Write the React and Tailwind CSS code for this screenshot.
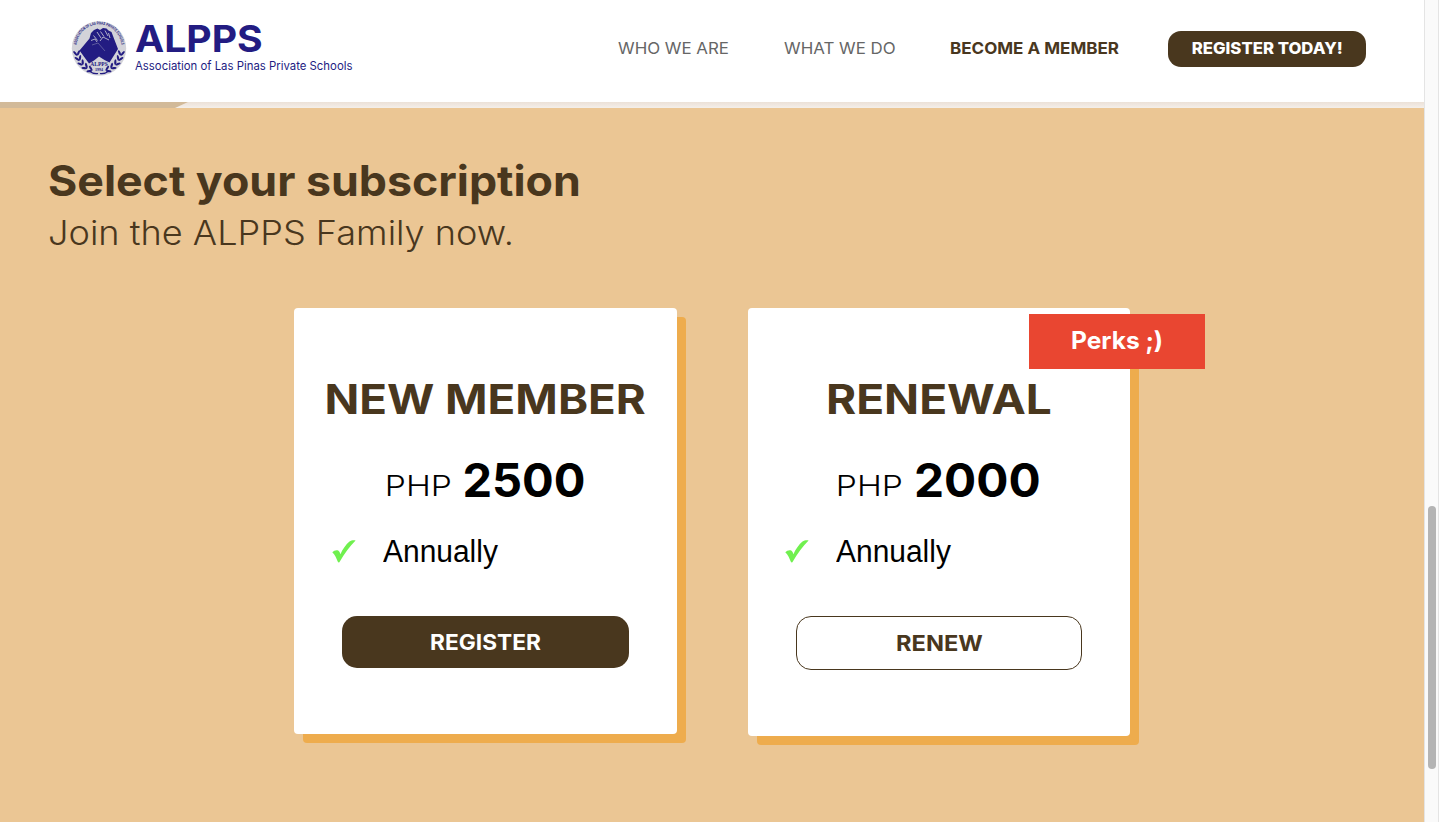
const BROWN = "text-[#49371e]";

function Seal() {
  const leaves = [8, 22, 36, 50, 64].flatMap((deg) => {
    const a = (deg * Math.PI) / 180;
    return [
      { x: 28 - Math.cos(a) * 22.5, y: 28 + Math.sin(a) * 22.5, r: -deg },
      { x: 28 + Math.cos(a) * 22.5, y: 28 + Math.sin(a) * 22.5, r: deg },
    ];
  });
  return (
    <svg viewBox="0 0 56 56" className="mt-px h-[56px] w-[56px] shrink-0 overflow-visible">
      <circle cx="28" cy="27.500" r="27.200" fill="#d3d3d9" />
      <defs>
        <path id="seal-arc" d="M5.500 26a22.500 22.500 0 0 1 45 0" />
      </defs>
      <text fontSize="4.300" fontWeight="700" fill="#231c82" fontFamily="Liberation Sans, sans-serif">
        <textPath href="#seal-arc" startOffset="2" textLength="66" lengthAdjust="spacingAndGlyphs">ASSOCIATION OF LAS PINAS PRIVATE SCHOOLS</textPath>
      </text>
      {leaves.map(({ x, y, r }, i) => (
        <g key={i} transform={`translate(${x} ${y}) rotate(${r})`} fill="#231c82">
          <ellipse cx="-1.900" cy="0" rx="1.100" ry="2.900" transform="rotate(-32)" />
          <ellipse cx="1.900" cy="0" rx="1.100" ry="2.900" transform="rotate(32)" />
        </g>
      ))}
      <path d="M18 50q5 3.500 9 2.500M38 50q-5 3.500-9 2.500" stroke="#231c82" strokeWidth="1.200" fill="none" />
      <path d="M8.500 29.500 18.500 17.500 20 12l3-3 3.500-1.500 2.500 1.500 3-2 3.500.5 2 2 3 1.500 1.500 4L47 28l-8.500 13.500-5-2.500-5.500-3.500-5 4-5 3z" fill="#231c82" />
      <path d="M20 19.500l4-1.500 2 3M22.500 14.500l4 5M26 11l4 6M29.500 10.500l3.500 5M34 9.500l3 5.500M37.500 12l1.500 5M29 20l3-4 6 3" stroke="#d3d3d9" strokeWidth=".8" fill="none" />
      <path d="M21 24l6-2 7 8" stroke="#8583b0" strokeWidth=".6" fill="none" />
      <text x="28" y="45" textAnchor="middle" fontSize="5.500" fontWeight="700" fill="#231c82" fontFamily="Liberation Serif, serif">ALPPS</text>
      <text x="28" y="49.500" textAnchor="middle" fontSize="4" fontWeight="700" fill="#231c82" fontFamily="Liberation Serif, serif">1994</text>
    </svg>
  );
}

function Check() {
  return (
    <svg viewBox="0 0 24 23" className="mb-[2px] h-[23px] w-[24px] shrink-0" fill="#70f04f">
      <path d="M.3 12.200C2 10.400 4.600 9.700 6.200 10.600 7.400 11.400 7.900 12.800 8.400 14.300 10.600 9.500 13.800 4.500 17.500 1.600 19.300.3 21.400.2 23.600.5 18 6 12.500 13.500 8 21.300 7.200 22.900 6.400 22.900 5.700 21.500 4.300 18 3 14.500.3 12.200Z" />
    </svg>
  );
}

function Plan({ title, titleClass, price, priceClass, rowClass, perkClass, cardClass, button, children }) {
  return (
    <article className={`relative flex flex-col rounded bg-white shadow-[9px_9px_0_#eeac4d] ${cardClass}`}>
      <h2 className={`mt-[66px] flex h-[50px] items-center justify-center whitespace-nowrap text-[41.500px] font-bold ${BROWN}`}>
        <span className={titleClass}>{title}</span>
      </h2>
      <p className={`mt-[26px] flex h-[60px] items-baseline justify-center gap-[11px] whitespace-nowrap text-black ${rowClass}`}>
        <span className="inline-block origin-right -translate-y-px scale-x-[1.158] text-[29px] font-light">PHP</span>
        <span className={`inline-block text-[47px] font-bold leading-[60px] ${priceClass}`}>{price}</span>
      </p>
      <div className={`mt-[24px] flex h-[36px] items-center gap-[27px] font-['Liberation_Sans',Arial,sans-serif] text-[31px] text-black ${perkClass}`}>
        <Check />
        <span className="inline-block origin-left scale-x-[0.966]">Annually</span>
      </div>
      {button}
      {children}
    </article>
  );
}

export default function App() {
  return (
    <div className="flex h-[822px] w-full overflow-hidden bg-[#ebc694] font-['Inter',sans-serif]">
      <div className="flex min-w-0 flex-1 flex-col">
        <header className="flex h-[102px] shrink-0 items-start bg-white pl-[71px]">
          <div className="flex pt-[20px]">
            <Seal />
            <div className="ml-[8px] w-[300px] whitespace-nowrap text-[#231c82]">
              <div className="h-[39px] text-[37px] font-bold leading-[38px]"><span className="inline-block origin-left scale-x-[1.058]">ALPPS</span></div>
              <div className="text-[11.500px] leading-[14px]"><span className="inline-block origin-left scale-x-[0.988]">Association of Las Pinas Private Schools</span></div>
            </div>
          </div>
          <nav className="ml-[183px] flex h-[98px] items-center whitespace-nowrap text-[16px] text-[#666]">
            <a className="w-[166px] pb-[2px]"><span className="inline-block origin-left scale-x-[1.055]">WHO WE ARE</span></a>
            <a className="w-[166px] pb-[2px]"><span className="inline-block origin-left scale-x-[1.055]">WHAT WE DO</span></a>
            <a className={`w-[218px] pb-[2px] font-bold ${BROWN}`}><span className="inline-block origin-left scale-x-[1.063]">BECOME A MEMBER</span></a>
            <button className="flex h-[36px] w-[198px] items-center justify-center rounded-[13px] bg-[#49371e] pb-[2px] font-extrabold text-white"><span className="inline-block scale-x-[1.045]">REGISTER TODAY!</span></button>
          </nav>
        </header>
        <div className="flex h-[6px] shrink-0 bg-linear-to-b from-[#ece1d7] to-[#f4efea]">
          <svg viewBox="0 0 188 6" className="h-[6px] w-[188px]"><path d="M0 0h188l-13 6H0z" fill="#d2ba99" /></svg>
        </div>
        <main className={`flex flex-1 flex-col ${BROWN}`}>
          <div className="whitespace-nowrap pl-[48px] pt-[47px]">
            <h1 className="h-[52px] text-[42px] font-bold leading-[52px]"><span className="inline-block origin-left scale-x-[1.064]">Select your subscription</span></h1>
            <p className="h-[52px] text-[33.500px] font-light leading-[52px]"><span className="inline-block origin-left scale-x-[1.078]">Join the ALPPS Family now.</span></p>
          </div>
          <section className="mt-[49px] flex items-start gap-[71px] pl-[294px]">
            <Plan
              title="NEW MEMBER" price="2500" titleClass="inline-block scale-x-[1.1]" priceClass="" rowClass="pl-[8px]" perkClass="pl-[38px]" cardClass="h-[426px] w-[383px]"
              button={<button className="mx-[48px] mt-[46px] h-[52px] rounded-[15px] bg-[#49371e] text-[21.500px] font-bold text-white"><span className="inline-block scale-x-[1.055]">REGISTER</span></button>}
            />
            <Plan
              title="RENEWAL" price="2000" titleClass="inline-block scale-x-[1.108]" priceClass="origin-left scale-x-[1.016]" rowClass="pl-[6px]" perkClass="pl-[37px]" cardClass="h-[428px] w-[382px]"
              button={<button className="mx-[48px] mt-[46px] h-[54px] rounded-[15px] border border-[#49371e] text-[21.500px] font-bold text-[#49371e]"><span className="inline-block scale-x-[1.1]">RENEW</span></button>}
            >
              <div className="absolute left-[281px] top-[6px] flex h-[55px] w-[176px] items-center justify-center bg-[#e94631] pb-[2px] text-[24px] font-bold text-white"><span className="inline-block scale-x-[1.022]">Perks ;)</span></div>
            </Plan>
          </section>
        </main>
      </div>
      <aside className="flex w-[15px] shrink-0 flex-col items-center border-x border-[#e4e4e4] bg-[#fafafa] pt-[506px]">
        <div className="h-[263px] w-[8px] rounded-full bg-[#b4b4b4]" />
      </aside>
    </div>
  );
}
